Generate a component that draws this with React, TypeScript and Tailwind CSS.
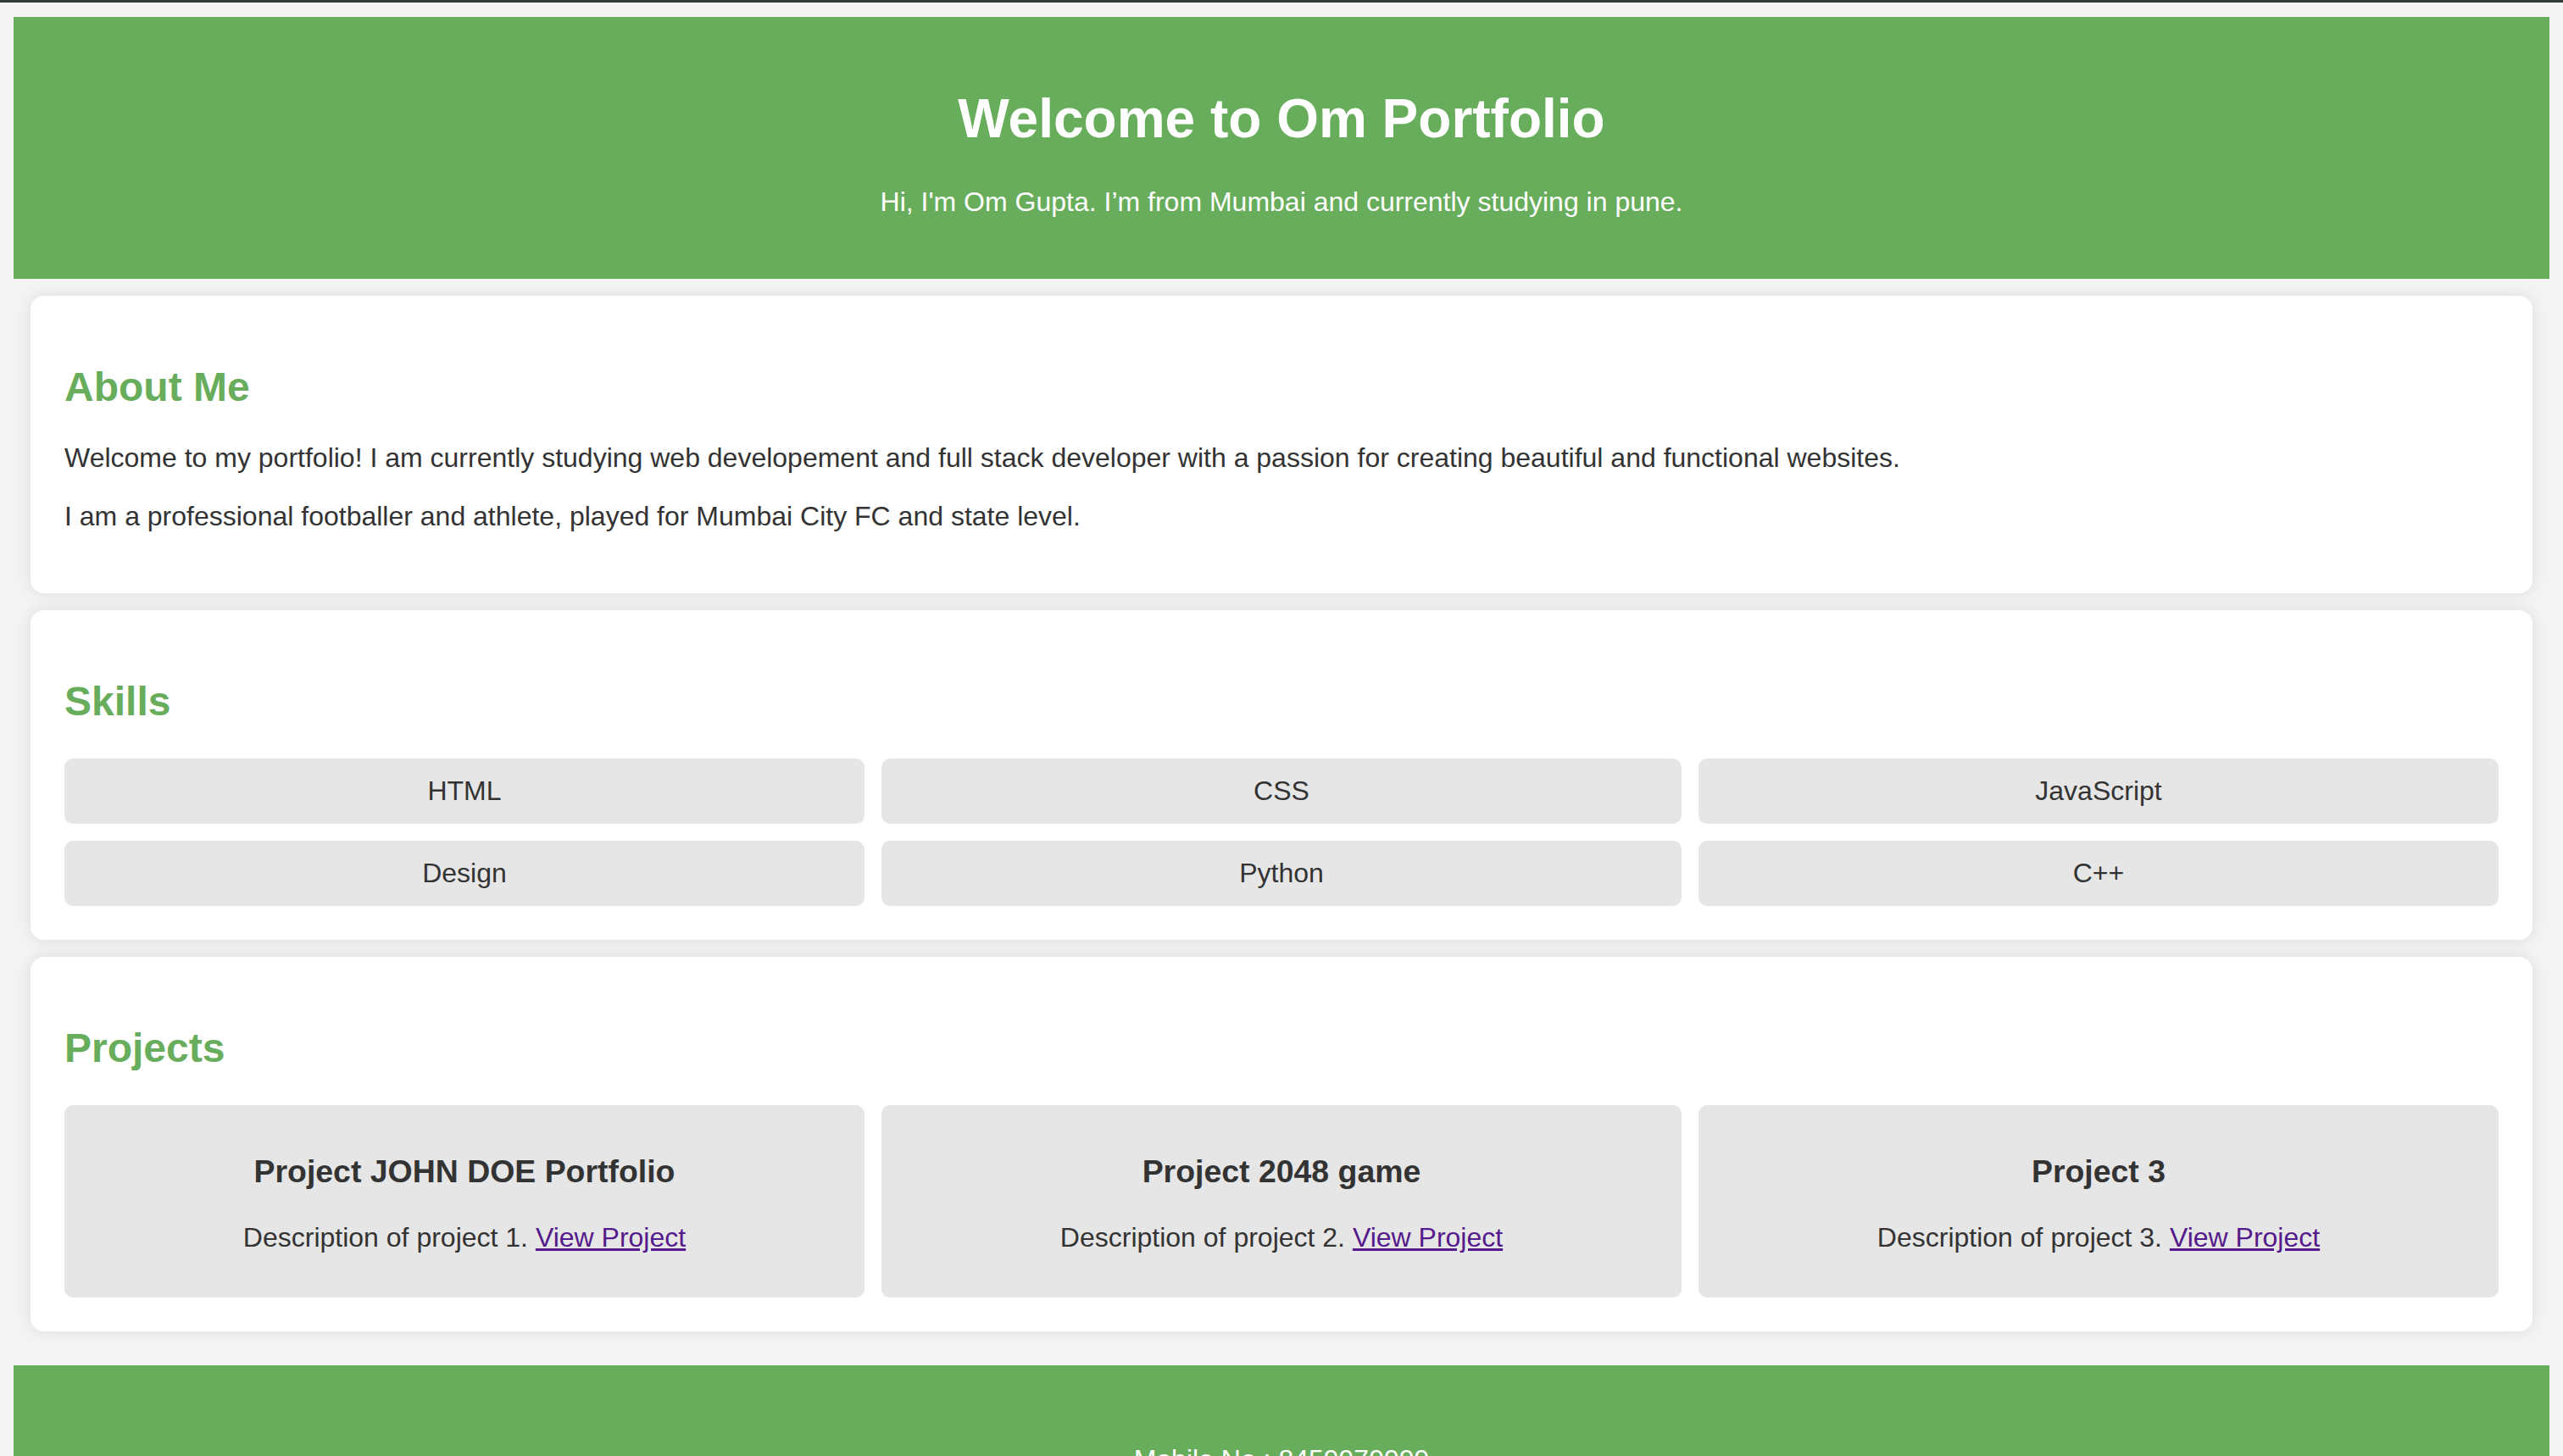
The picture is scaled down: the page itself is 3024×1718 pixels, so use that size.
import React from 'react';

const skills = ['HTML', 'CSS', 'JavaScript', 'Design', 'Python', 'C++'];

const projects = [
    { title: 'Project JOHN DOE Portfolio', desc: 'Description of project 1.' },
    { title: 'Project 2048 game', desc: 'Description of project 2.' },
    { title: 'Project 3', desc: 'Description of project 3.' },
];

const Card: React.FC<{ title: string; children: React.ReactNode; gap?: string }> = ({ title, children, gap = 'mb-10' }) => (
    <section className="mx-5 bg-white rounded-[16px] p-10 shadow-[0_0_20px_rgba(0,0,0,0.1)]">
        <h2 className={`mt-10 ${gap} text-[48px] leading-[55px] font-bold text-[#68ad5c]`}>{title}</h2>
        {children}
    </section>
);

const App: React.FC = () => {
    return (
        <div className="min-h-screen bg-[#f4f4f4] text-[#333] font-['Liberation_Sans',Arial,sans-serif]">
            <div className="h-[3px] bg-[#2f3d34]" />
            <div className="px-4 pt-[17px]">
                <div className="flex flex-col gap-5">
                    <header className="bg-[#68ad5c] text-white text-center pt-[83px] pb-[72px]">
                        <h1 className="text-[64px] leading-[74px] font-bold">Welcome to Om Portfolio</h1>
                        <p className="mt-[43px] text-[32px] leading-[37px]">
                            Hi, I'm Om Gupta. I’m from Mumbai and currently studying in pune.
                        </p>
                    </header>

                    <Card title="About Me" gap="mb-[38px]">
                        <div className="flex flex-col gap-8 mb-8 text-[32px] leading-[37px]">
                            <p>
                                Welcome to my portfolio! I am currently studying web developement and full stack developer with a
                                passion for creating beautiful and functional websites.
                            </p>
                            <p>I am a professional footballer and athlete, played for Mumbai City FC and state level.</p>
                        </div>
                    </Card>

                    <Card title="Skills">
                        <div className="grid grid-cols-3 gap-5">
                            {skills.map((s) => (
                                <div key={s} className="bg-[#e6e6e6] rounded-[10px] py-5 text-center text-[32px] leading-[37px]">
                                    {s}
                                </div>
                            ))}
                        </div>
                    </Card>

                    <Card title="Projects">
                        <div className="grid grid-cols-3 gap-5">
                            {projects.map((p) => (
                                <div key={p.title} className="bg-[#e6e6e6] rounded-[10px] px-5 pt-5 pb-5 text-center">
                                    <h3 className="mt-[37px] text-[37.44px] leading-[43px] font-bold">{p.title}</h3>
                                    <p className="mt-[38px] mb-8 text-[32px] leading-[37px]">
                                        {p.desc}{' '}
                                        <a href="#" className="text-[#551a8b] underline">
                                            View Project
                                        </a>
                                    </p>
                                </div>
                            ))}
                        </div>
                    </Card>
                </div>

                <footer className="mt-10 bg-[#68ad5c] text-white text-center pt-[93px] pb-10">
                    <p className="text-[32px] leading-[37px]">Mobile No.: 8459979999</p>
                </footer>
            </div>
        </div>
    );
};

export default App;
